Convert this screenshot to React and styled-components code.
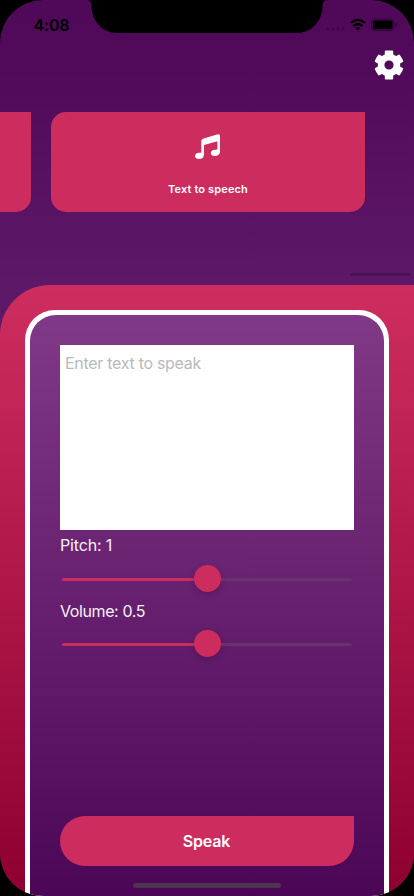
import React from 'react';
import styled, { createGlobalStyle } from 'styled-components';

const GlobalStyle = createGlobalStyle`
  * { box-sizing: border-box; }
  body { margin: 0; background: #000; font-family: Inter, "Liberation Sans", sans-serif; }
`;

const Screen = styled.main`
  position: relative;
  width: 414px;
  height: 896px;
  overflow: hidden;
  display: flex;
  flex-direction: column;
  border-radius: 43px;
  background: linear-gradient(#4f0958 0, #500a59 70px, #5d1867 285px, #5d1867);
`;

const Notch = styled.svg`
  position: absolute;
  top: 0;
  left: 86px;
  width: 242px;
  height: 33px;
`;

const StatusBar = styled.header`
  height: 48px;
  flex: none;
  display: flex;
  justify-content: space-between;
  padding: 15px 16px 0 33.5px;
`;

const Time = styled.span`
  font-size: 16px;
  line-height: 20px;
  font-weight: 600;
  letter-spacing: -0.15px;
  color: #000;
`;

const StatusIcons = styled.svg`
  width: 74px;
  height: 20px;
`;

const Toolbar = styled.div`
  height: 64px;
  flex: none;
  display: flex;
  justify-content: flex-end;
  padding: 1px 9px 0 0;
`;

const IconButton = styled.button`
  width: 32px;
  height: 32px;
  padding: 0;
  border: 0;
  background: none;
  color: #fff;
  svg { display: block; width: 32px; height: 32px; }
`;

const Carousel = styled.section`
  flex: none;
  height: 173px;
  display: flex;
  align-items: flex-start;
  gap: 20px;
  margin-left: -283px;
`;

const Card = styled.article`
  flex: none;
  width: 314px;
  height: 100px;
  display: flex;
  flex-direction: column;
  align-items: center;
  padding-top: 21px;
  border-radius: 15px 0 15px 15px;
  background: #cd2c5e;
  color: #fff;
`;

const NoteIcon = styled.svg`
  width: 28px;
  height: 28px;
`;

const CardTitle = styled.span`
  margin-top: 21px;
  font-size: 11px;
  line-height: 14px;
  font-weight: 600;
  letter-spacing: 0.13px;
`;

const ScrollIndicator = styled.div`
  position: absolute;
  top: 273px;
  left: 350px;
  width: 61px;
  height: 3px;
  border-radius: 2px;
  background: #4c1253;
`;

const Panel = styled.section`
  flex: 1;
  display: flex;
  padding: 25px 25px 0;
  border-top-left-radius: 50px;
  background: linear-gradient(#ce2d5f, #8d0030);
`;

const Frame = styled.div`
  flex: 1;
  display: flex;
  padding: 5px 5px 0;
  border-radius: 30px 30px 0 0;
  background: #fff;
`;

const Form = styled.form`
  flex: 1;
  min-width: 0;
  display: flex;
  flex-direction: column;
  padding: 30px 30px 0;
  border-radius: 26px 26px 0 0;
  background: linear-gradient(#7f3986, #4c0656);
`;

const TextInput = styled.textarea`
  display: block;
  flex: none;
  width: 294px;
  height: 185px;
  padding: 8px 5px;
  border: 0;
  border-radius: 0;
  outline: 0;
  resize: none;
  font: 400 16px/21px Inter, "Liberation Sans", sans-serif;
  letter-spacing: -0.29px;
  &::placeholder { color: #b9b9bb; opacity: 1; }
`;

const Label = styled.label`
  flex: none;
  margin-top: ${(p) => p.$gap}px;
  font-size: 16px;
  line-height: 20px;
  letter-spacing: ${(p) => p.$tracking}px;
  color: #f8f1f9;
`;

const Slider = styled.div`
  flex: none;
  height: 27px;
  margin-top: ${(p) => p.$gap}px;
  padding: 0 2px;
  display: flex;
  align-items: center;
`;

const TrackFill = styled.div`
  width: 132px;
  height: 3px;
  margin-top: 1px;
  border-radius: 2px 0 0 2px;
  background: #cd2c5e;
`;

const Thumb = styled.div`
  flex: none;
  width: 27px;
  height: 27px;
  border-radius: 50%;
  background: #cd2c5e;
  box-shadow: 0 3px 6px rgba(30, 0, 40, 0.2);
`;

const TrackRest = styled.div`
  flex: 1;
  height: 3px;
  margin-top: 1px;
  border-radius: 0 2px 2px 0;
  background: #69316f;
`;

const SpeakButton = styled.button`
  flex: none;
  height: 50px;
  margin: auto 0 30px;
  padding: 0 1px 1px 0;
  border: 0;
  border-radius: 25px 0 25px 25px;
  background: #cd2c5e;
  color: #fff;
  font: 600 16px/20px Inter, "Liberation Sans", sans-serif;
  letter-spacing: -0.2px;
`;

const HomeIndicator = styled.div`
  position: absolute;
  left: 133px;
  bottom: 8px;
  width: 148px;
  height: 5px;
  border-radius: 3px;
  background: #4d3550;
`;

function Gear() {
  const teeth = [0, 60, 120, 180, 240, 300];
  return (
    <svg viewBox="-16 -16 32 32" aria-hidden="true">
      <g fill="currentColor">
        {teeth.map((a) => (
          <path
            key={a}
            transform={`rotate(${a})`}
            d="M-4.2-8V-13.4Q-4.2-14.3-3.3-14.4Q0-14.8 3.3-14.4Q4.2-14.3 4.2-13.4V-8Z"
          />
        ))}
      </g>
      <circle r="7.9" fill="none" stroke="currentColor" strokeWidth="6.6" />
    </svg>
  );
}

export default function App() {
  return (
    <>
      <GlobalStyle />
      <Screen>
        <Notch viewBox="0 0 242 33" aria-hidden="true">
          <path d="M0 0Q5.5 0 5.5 5.5C5.5 21 16 33 32 33H210C226 33 236.5 21 236.5 5.5Q236.5 0 242 0Z" />
        </Notch>
        <StatusBar>
          <Time>4:08</Time>
          <StatusIcons viewBox="324 15 74 20" aria-hidden="true">
            <g fill="#3c0744">
              <circle cx="328" cy="28.7" r="1.5" />
              <circle cx="333" cy="28.7" r="1.5" />
              <circle cx="338" cy="28.7" r="1.5" />
              <circle cx="343" cy="28.7" r="1.5" />
            </g>
            <g fill="none" stroke="#000" strokeWidth="2.2">
              <path d="M350.6 23Q357.8 16.7 365 23" />
              <path d="M353.2 26Q357.8 22 362.4 26" />
            </g>
            <path d="M355.2 27.8Q357.8 25.7 360.4 27.8L357.8 30.4Z" />
            <rect x="371.7" y="19.2" width="22" height="11.2" rx="3" fill="none" stroke="#330539" />
            <rect x="372.9" y="20.4" width="19.6" height="8.8" rx="1.5" />
            <path d="M395 22.8Q397 23.2 397 24.8T395 26.8Z" fill="#330539" />
          </StatusIcons>
        </StatusBar>
        <Toolbar>
          <IconButton aria-label="Settings"><Gear /></IconButton>
        </Toolbar>
        <Carousel>
          <Card />
          <Card>
            <NoteIcon viewBox="194 133 28 28" aria-hidden="true">
              <path
                fill="currentColor"
                d="M201.3 141.1Q201.3 139.3 203 138.7L217.7 134.3Q220 133.7 220 135.8V151.2C220 154 218 156 214.8 156C212.3 156 210.8 154.8 210.8 153C210.8 150.9 213 149.7 215.2 149.7C216.3 149.7 217.4 149.9 217.4 149.1V141.3L204 144.9V154.2C204 157.4 201.8 159.1 199 159.1C196.6 159.1 195 158 195 156.1C195 154 197 152.8 199.2 152.8C200.5 152.8 201.3 152.9 201.3 152.1Z"
              />
            </NoteIcon>
            <CardTitle>Text to speech</CardTitle>
          </Card>
        </Carousel>
        <ScrollIndicator />
        <Panel>
          <Frame>
            <Form onSubmit={(e) => e.preventDefault()}>
              <TextInput placeholder="Enter text to speak" />
              <Label $gap={5} $tracking={-0.15}>Pitch: 1</Label>
              <Slider $gap={10}>
                <TrackFill />
                <Thumb />
                <TrackRest />
              </Slider>
              <Label $gap={9} $tracking={-0.4}>Volume: 0.5</Label>
              <Slider $gap={9.4}>
                <TrackFill />
                <Thumb />
                <TrackRest />
              </Slider>
              <SpeakButton>Speak</SpeakButton>
            </Form>
          </Frame>
        </Panel>
        <HomeIndicator />
      </Screen>
    </>
  );
}
